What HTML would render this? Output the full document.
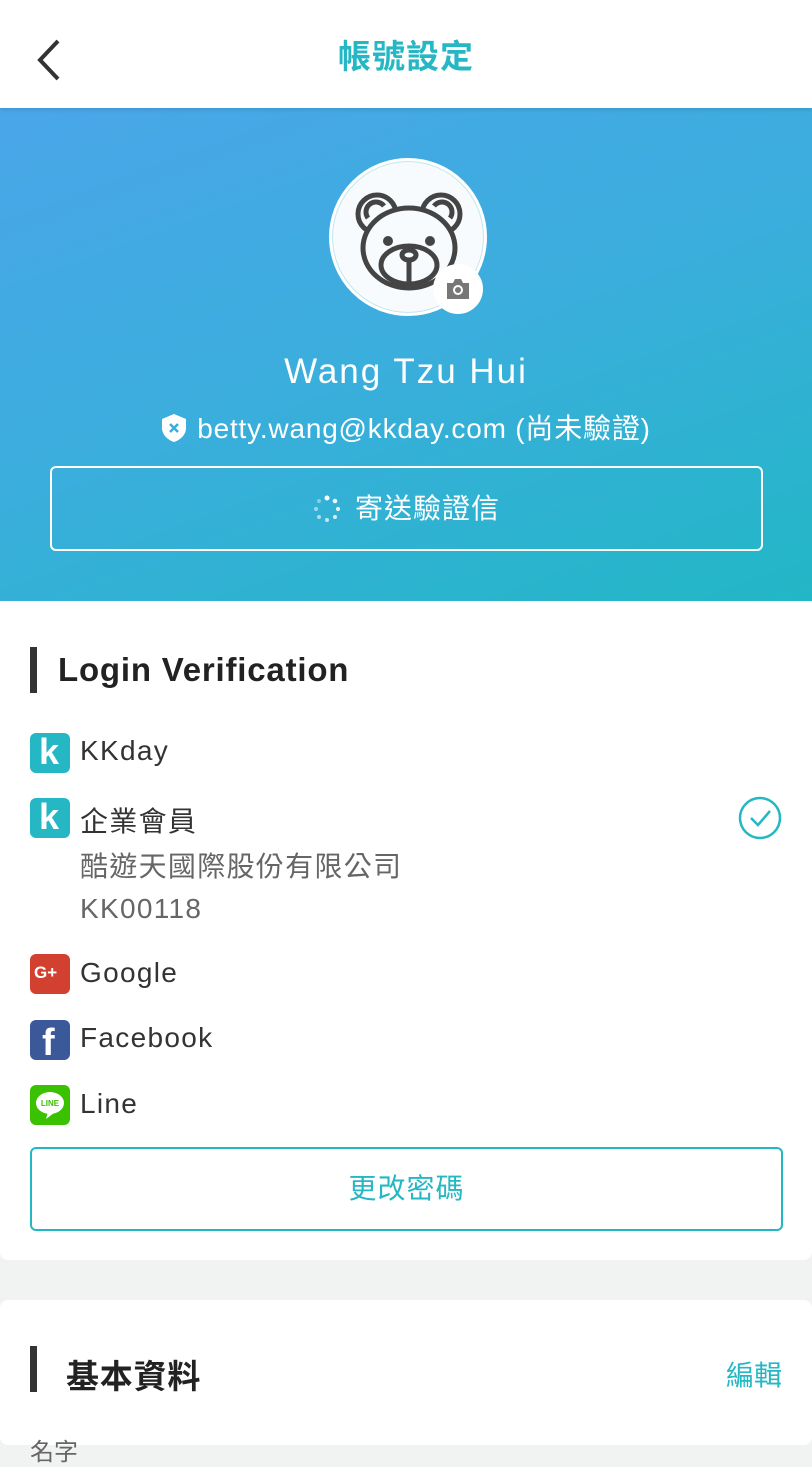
<!DOCTYPE html>
<html><head><meta charset="utf-8">
<style>
*{margin:0;padding:0;box-sizing:border-box}
body{width:812px;height:1445px;overflow:hidden;background:#f1f2f2;font-family:"Liberation Sans","Noto Sans CJK TC",sans-serif;color:#333;position:relative}
.hdr{position:absolute;top:0;left:0;width:812px;height:108px;background:#fff;box-shadow:0 2px 4px rgba(0,0,0,.1);z-index:2}
.hdr h1{position:absolute;top:30px;width:100%;text-align:center;font-size:33px;color:#26b7c5;font-weight:bold;letter-spacing:1px}
.banner{position:absolute;top:108px;left:0;width:812px;height:493px;background:linear-gradient(160deg,#4aa6e9 0%,#3aaedc 50%,#22b7c6 100%)}
.av{position:absolute;left:329px;top:158px;width:158px;height:158px;border-radius:50%;background:#f7fbfd;border:3px solid #fff;box-shadow:0 0 0 1px #bfe6ee inset}
.cam{position:absolute;left:433px;top:264px;width:50px;height:50px;border-radius:50%;background:#fff}
.name{position:absolute;top:352px;width:100%;text-align:center;color:#fff;font-size:35px;letter-spacing:2px}
.mail{position:absolute;top:407px;width:100%;text-align:center;color:#fff;font-size:28px;letter-spacing:.8px}
.btn1{position:absolute;left:50px;top:466px;width:713px;height:85px;border:2px solid #fff;border-radius:6px;color:#fff;font-size:28px;text-align:center;line-height:81px;letter-spacing:1px}
.card{position:absolute;left:0;width:812px;background:#fff;border-radius:8px}
.bar{position:absolute;left:30px;width:7px;background:#333}
.ttl{position:absolute;font-size:33px;font-weight:bold;color:#222;letter-spacing:.8px}
.row{position:absolute;left:80px;font-size:28px;color:#333;letter-spacing:1.3px}
.ic{position:absolute;left:30px;width:40px;height:40px;border-radius:6px}
.gray{color:#666}
.btn2{position:absolute;left:30px;top:1147px;width:753px;height:84px;border:2px solid #26b7c5;border-radius:6px;color:#26b7c5;font-size:28px;text-align:center;line-height:80px;letter-spacing:1px}
</style></head><body>
<div class="hdr">
<svg style="position:absolute;left:34px;top:38px" width="30" height="44" viewBox="0 0 30 44"><path d="M24 3 L6 22 L24 41" stroke="#333" stroke-width="4" fill="none"/></svg>
<h1>帳號設定</h1></div>
<div class="banner"></div>
<div class="av">
<svg style="position:absolute;left:22px;top:30px" width="110" height="100" viewBox="0 0 110 100" fill="none" stroke="#444" stroke-width="5">
<circle cx="23" cy="23" r="19"/><circle cx="87" cy="23" r="19"/>
<path d="M14 27 A10 10 0 0 1 30 15"/><path d="M96 27 A10 10 0 0 0 80 15"/>
<ellipse cx="55" cy="57" rx="46" ry="40" fill="#f7fbfd"/>
<ellipse cx="55" cy="74" rx="28" ry="19"/>
<ellipse cx="55" cy="64" rx="7" ry="5"/><path d="M55 69 V92"/>
<circle cx="34" cy="50" r="2.5" fill="#444"/><circle cx="76" cy="50" r="2.5" fill="#444"/>
</svg></div>
<div class="cam"><svg style="position:absolute;left:12px;top:14px" width="26" height="22" viewBox="0 0 26 22"><path d="M2 5h6l2-4h6l2 4h6v16H2z" fill="#777"/><circle cx="13" cy="12" r="5" fill="#fff"/><circle cx="13" cy="12" r="3" fill="#777"/></svg></div>
<div class="name">Wang Tzu Hui</div>
<div class="mail"><svg width="26" height="30" viewBox="0 0 26 30" style="vertical-align:-5px;margin-right:10px"><path d="M13 1 L25 6 V15 C25 22 19 27 13 29 C7 27 1 22 1 15 V6Z" fill="#fff"/><path d="M9 11 L17 19 M17 11 L9 19" stroke="#3aaedc" stroke-width="2.5"/></svg>betty.wang@kkday.com (尚未驗證)</div>
<div class="btn1"><svg width="28" height="28" viewBox="0 0 28 28" style="vertical-align:-5px;margin-right:14px" fill="#fff"><circle cx="14" cy="3" r="2.5"/><circle cx="22" cy="6" r="2.3" opacity=".9"/><circle cx="25" cy="14" r="2.1" opacity=".85"/><circle cx="22" cy="22" r="2" opacity=".8"/><circle cx="14" cy="25" r="2" opacity=".7"/><circle cx="6" cy="22" r="2" opacity=".6"/><circle cx="3" cy="14" r="2" opacity=".5"/><circle cx="6" cy="6" r="2" opacity=".4"/></svg>寄送驗證信</div>

<div class="card" style="top:601px;height:659px;border-radius:0 0 8px 8px">
<div class="bar" style="top:46px;height:46px"></div>
<div class="ttl" style="left:58px;top:50px">Login Verification</div>
</div>
<div class="ic" style="top:733px;background:#26b7c5"><span style="position:absolute;left:9px;top:-2px;color:#fff;font-size:36px;font-weight:bold">k</span></div>
<div class="row" style="top:735px">KKday</div>
<div class="ic" style="top:798px;background:#26b7c5"><span style="position:absolute;left:9px;top:-2px;color:#fff;font-size:36px;font-weight:bold">k</span></div>
<div class="row" style="top:800px">企業會員</div>
<div class="row gray" style="top:845px">酷遊天國際股份有限公司</div>
<div class="row gray" style="top:893px">KK00118</div>
<svg style="position:absolute;left:738px;top:796px" width="44" height="44" viewBox="0 0 44 44" fill="none" stroke="#26b7c5" stroke-width="2.5"><circle cx="22" cy="22" r="20"/><path d="M13 22 L20 29 L32 15"/></svg>
<div class="ic" style="top:954px;background:#d2402f"><span style="position:absolute;left:4px;top:9px;color:#fff;font-size:17px;font-weight:bold">G+</span></div>
<div class="row" style="top:957px">Google</div>
<div class="ic" style="top:1020px;background:#3b5998"><span style="position:absolute;left:12px;top:2px;color:#fff;font-size:38px;font-weight:bold">f</span></div>
<div class="row" style="top:1022px">Facebook</div>
<div class="ic" style="top:1085px;background:#3ac100"><svg style="position:absolute;left:4px;top:5px" width="32" height="30" viewBox="0 0 32 30"><ellipse cx="16" cy="13" rx="14" ry="11" fill="#fff"/><path d="M14 22 L12 29 L20 23Z" fill="#fff"/><text x="16" y="16" text-anchor="middle" font-size="8" font-weight="bold" fill="#3ac100" font-family="Liberation Sans">LINE</text></svg></div>
<div class="row" style="top:1088px">Line</div>
<div class="btn2">更改密碼</div>

<div class="card" style="top:1300px;height:145px">
<div class="bar" style="top:46px;height:46px"></div>
<div class="ttl" style="left:66px;top:50px">基本資料</div>
<div style="position:absolute;right:30px;top:54px;font-size:28px;color:#26b7c5">編輯</div>
<div style="position:absolute;left:30px;top:132px;font-size:24px;color:#666">名字</div>
</div>
</body></html>
